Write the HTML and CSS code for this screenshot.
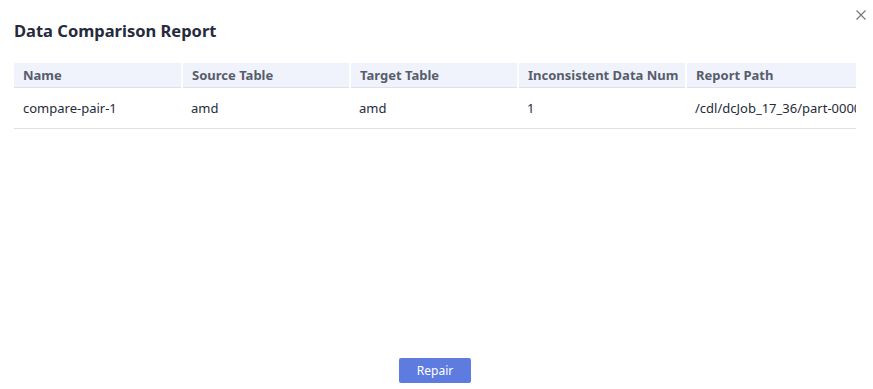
FILE: index.html
```html
<!DOCTYPE html>
<html lang="en">
<head>
<meta charset="UTF-8">
<meta name="viewport" content="width=device-width, initial-scale=1.0">
<title>Data Comparison Report</title>
<link rel="stylesheet" href="styles.css">
</head>
<body>
  <div class="dialog">
    <div class="dialog-header">
      <h1 class="dialog-title">Data Comparison Report</h1>
      <button type="button" class="close-btn" aria-label="Close">
        <svg width="10" height="10" viewBox="0 0 10 10">
          <path d="M0.5 0.5 L9.5 9.5 M9.5 0.5 L0.5 9.5" stroke="#71757f" stroke-width="1.1" fill="none"/>
        </svg>
      </button>
    </div>
    <div class="table-wrap">
      <table class="report-table">
        <colgroup>
          <col class="col">
          <col class="col">
          <col class="col">
          <col class="col">
          <col class="col-path">
        </colgroup>
        <thead>
          <tr>
            <th>Name</th>
            <th>Source Table</th>
            <th>Target Table</th>
            <th>Inconsistent Data Num</th>
            <th>Report Path</th>
          </tr>
        </thead>
        <tbody>
          <tr>
            <td>compare-pair-1</td>
            <td>amd</td>
            <td>amd</td>
            <td>1</td>
            <td>/cdl/dcJob_17_36/part-00000-report.csv</td>
          </tr>
        </tbody>
      </table>
    </div>
    <div class="dialog-footer">
      <button type="button" class="btn">Repair</button>
    </div>
  </div>
</body>
</html>
```

FILE: styles.css
```css
body {
  margin: 0;
  padding: 0;
  background-color: #fff;
  font-family: "Noto Sans", Arial, sans-serif;
  color: #252b3a;
}
.dialog {
  width: 873px;
  height: 389px;
  box-sizing: border-box;
  padding: 0 17px 0 14px;
  display: flex;
  flex-direction: column;
}
.dialog-header {
  display: flex;
  justify-content: space-between;
  align-items: flex-start;
  height: 63px;
}
.dialog-title {
  margin: 0;
  padding-top: 19px;
  font-size: 16.5px;
  font-weight: bold;
  line-height: 24px;
  color: #252b3a;
}
.close-btn {
  margin: 10px -10px 0 0;
  padding: 0;
  border: none;
  background: none;
  width: 10px;
  height: 10px;
  cursor: pointer;
}
.close-btn svg {
  display: block;
}
.table-wrap {
  overflow: hidden;
}
.report-table {
  width: 1000px;
  border-collapse: collapse;
  table-layout: fixed;
  font-size: 13px;
}
.report-table .col {
  width: 168px;
}
.report-table .col-path {
  width: 328px;
}
.report-table th {
  height: 24px;
  padding: 0 9px;
  text-align: left;
  font-weight: bold;
  color: #575d6c;
  background-color: #f0f3fb;
  border-right: 2px solid #fff;
  border-bottom: 1px solid #dfe1e6;
  white-space: nowrap;
  overflow: hidden;
}
.report-table td {
  height: 40px;
  padding: 0 9px;
  border-bottom: 1px solid #dfe1e6;
  white-space: nowrap;
  overflow: hidden;
}
.dialog-footer {
  margin-top: auto;
  padding-bottom: 6px;
  text-align: center;
}
.btn {
  width: 72px;
  height: 25px;
  padding: 0;
  font-family: inherit;
  font-size: 12px;
  color: #fff;
  background-color: #5e7ce0;
  border: none;
  border-radius: 2px;
  cursor: pointer;
}
```
